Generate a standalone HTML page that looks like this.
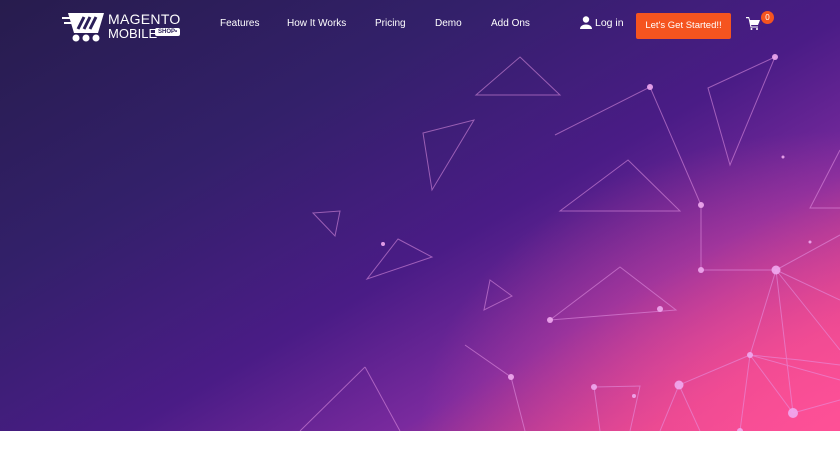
<!DOCTYPE html>
<html><head><meta charset="utf-8"><style>
*{margin:0;padding:0;box-sizing:border-box}
body{width:840px;height:472px;overflow:hidden;background:#fff;font-family:"Liberation Sans",sans-serif}
.hero{position:absolute;left:0;top:0;width:840px;height:431px;overflow:hidden;
background:linear-gradient(150deg,#271c4d 0%,#33206a 30%,#4a1c86 55%,#7a2a9e 72%,#d8438f 88%,#f54f98 100%)}
.hero:before{content:"";position:absolute;inset:0;background:radial-gradient(ellipse 420px 300px at 840px 431px,rgba(255,80,150,.9),rgba(255,80,150,0) 100%)}
svg.net{position:absolute;left:0;top:0}
.nav a{position:absolute;color:#fff;font-size:10px;text-decoration:none;top:18px}
.btn{position:absolute;left:636px;top:13px;width:95px;height:26px;background:#f5541f;color:#fff;font-size:9.5px;text-align:center;line-height:26px;border-radius:2px}
.badge{position:absolute;left:761px;top:11px;width:13px;height:13px;border-radius:50%;background:#f5541f;color:#fff;font-size:8px;text-align:center;line-height:13px}
</style></head><body>
<div class="hero">
<svg class="net" width="840" height="431" fill="none" stroke="rgba(230,150,230,.55)" stroke-width="1">
<polygon points="520,57 560,95 476,95"/>
<polygon points="423,133 474,120 432,190"/>
<polygon points="313,213 340,211 335,236"/>
<polygon points="398,239 432,257 367,279"/>
<polygon points="490,280 512,296 484,310"/>
<polygon points="628,160 680,211 560,211"/>
<polygon points="708,88 775,57 730,165"/>
<polygon points="620,267 676,310 550,320"/>
<polyline points="555,135 650,87 701,205 701,270 776,270"/>
<polyline points="840,150 810,208 840,208"/>
<polyline points="776,270 840,235 M776,270"/>
<path d="M776,270 L840,300 M776,270 L840,350 M776,270 L750,355 M776,270 L793,413 M750,355 L679,385 L660,431 M750,355 L740,431 M750,355 L840,380 M750,355 L793,413 M679,385 L700,431 M594,387 L640,386 L630,431 M594,387 L600,431 M465,345 L511,377 L525,431 M365,367 L300,431 M365,367 L400,431 M793,413 L840,400 M750,355 L800,360 L840,365"/>
<g fill="rgba(240,170,240,.9)" stroke="none">
<circle cx="650" cy="87" r="3"/><circle cx="775" cy="57" r="3"/><circle cx="701" cy="205" r="3"/><circle cx="701" cy="270" r="3"/><circle cx="776" cy="270" r="4.5"/><circle cx="550" cy="320" r="3"/><circle cx="660" cy="309" r="3"/><circle cx="750" cy="355" r="3"/><circle cx="679" cy="385" r="4.5"/><circle cx="594" cy="387" r="3"/><circle cx="793" cy="413" r="5"/><circle cx="511" cy="377" r="3"/><circle cx="383" cy="244" r="2"/><circle cx="740" cy="431" r="3"/><circle cx="634" cy="396" r="2"/><circle cx="810" cy="242" r="1.5"/><circle cx="783" cy="157" r="1.5"/>
</g>
</svg>
</div>
<svg style="position:absolute;left:62px;top:11px" width="44" height="32" viewBox="0 0 44 32">
<path d="M6,2 H42 L36,22 H12 Z" fill="#fff"/>
<path d="M16,18 L22,6 M22,18 L28,6 M28,18 L34,6" stroke="#2a1f58" stroke-width="3"/>
<rect x="0" y="6" width="9" height="2" fill="#fff"/><rect x="2" y="11" width="8" height="2" fill="#fff"/>
<circle cx="14" cy="27" r="3.5" fill="#fff"/><circle cx="24" cy="27" r="3.5" fill="#fff"/><circle cx="34" cy="27" r="3.5" fill="#fff"/>
</svg>
<div style="position:absolute;left:108px;top:12px;color:#fff;font-size:14px;letter-spacing:.3px;line-height:15px">MAGENTO</div>
<div style="position:absolute;left:108px;top:26px;color:#fff;font-size:13px;line-height:15px">MOBILE</div>
<div style="position:absolute;left:155px;top:28px;background:#fff;color:#2a1f58;font-size:6px;font-weight:bold;padding:1px 3px;border-radius:2px">SHOP•</div>
<div class="nav"><a style="left:220px">Features</a><a style="left:287px">How It Works</a><a style="left:375px">Pricing</a><a style="left:435px">Demo</a><a style="left:491px">Add Ons</a><a style="left:595px;font-size:10.5px;top:17px">Log in</a></div>
<svg style="position:absolute;left:580px;top:16px" width="12" height="13" viewBox="0 0 12 13" fill="#fff"><circle cx="6" cy="3.5" r="3.2"/><path d="M0,13 C0,7 12,7 12,13Z"/></svg>
<div class="btn">Let's Get Started!!</div>
<svg style="position:absolute;left:746px;top:17px" width="14" height="13" viewBox="0 0 14 13" fill="#fff"><path d="M0,0 H3 L4,3 H14 L12,8 H5 L5.5,9.5 H12 V10.5 H4.5 L2.5,1.2 H0Z"/><circle cx="5.5" cy="12" r="1"/><circle cx="11" cy="12" r="1"/></svg>
<div class="badge">0</div>
</body></html>
